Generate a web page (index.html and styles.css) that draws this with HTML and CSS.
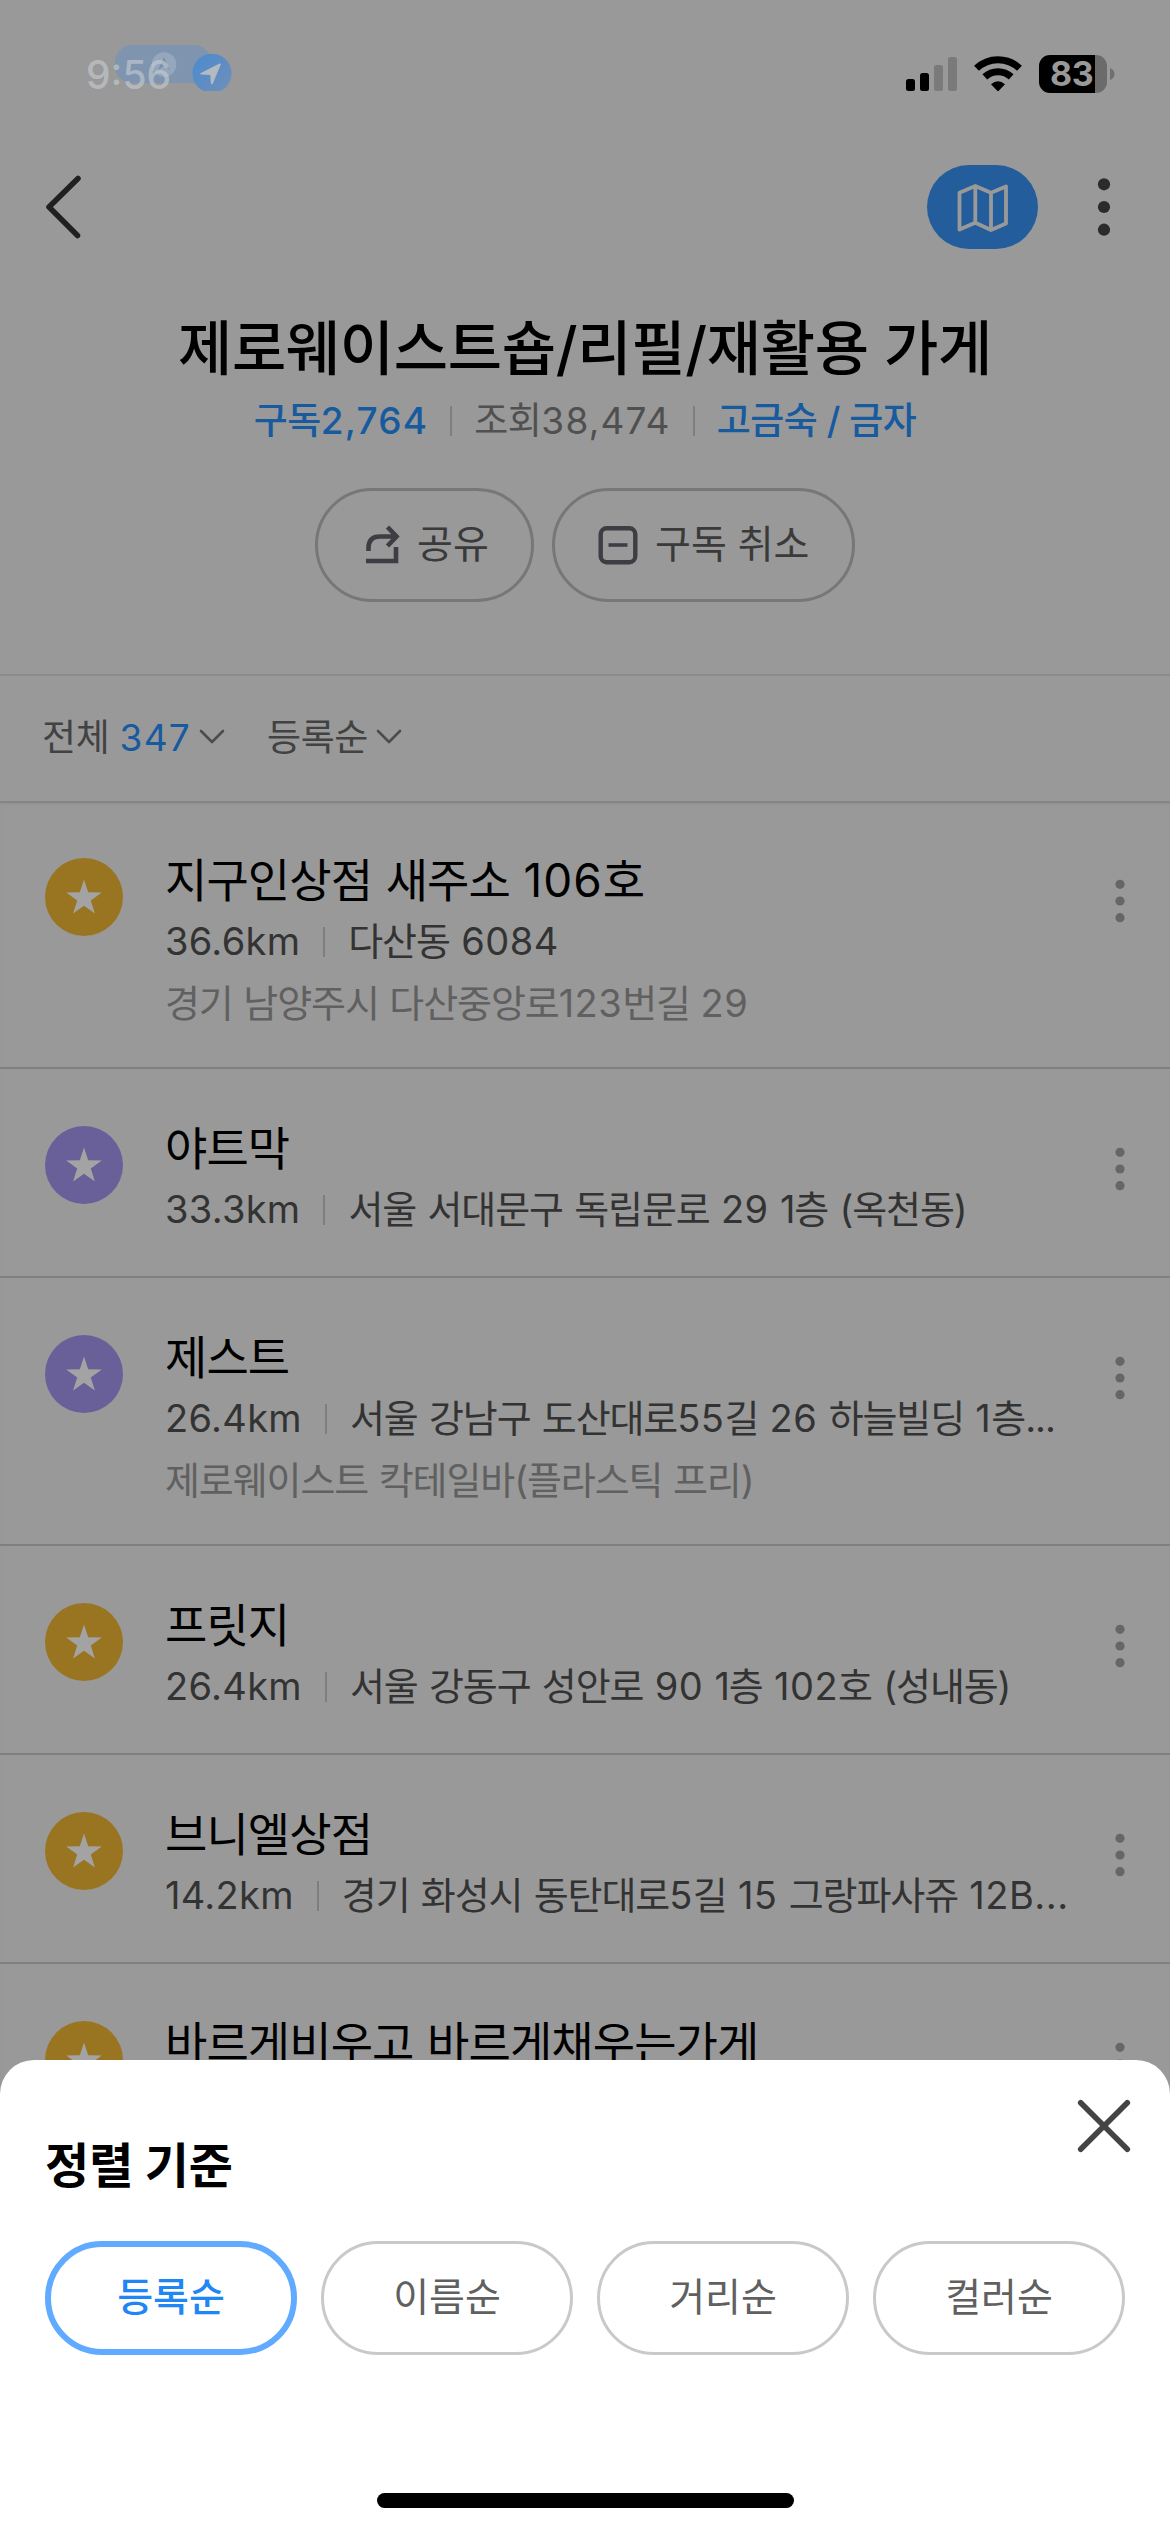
FILE: index.html
```html
<!DOCTYPE html>
<html lang="ko">
<head>
<meta charset="utf-8">
<title>제로웨이스트숍/리필/재활용 가게</title>
<link rel="stylesheet" href="styles.css">
</head>
<body>
<svg class="defs" width="0" height="0" aria-hidden="true">
  <symbol id="star" viewBox="0 0 78 78">
    <path d="M39 21.500l4.200 12.800 13.600.1-11 8.100 4.100 13.100L39 47.800l-10.900 7.800 4.100-13.100-11-8.100 13.600-.1z" fill="#a3a3a3"/>
  </symbol>
  <symbol id="dots" viewBox="0 0 10 44">
    <circle cx="5" cy="5.3" r="4.6"/><circle cx="5" cy="22" r="4.6"/><circle cx="5" cy="38.7" r="4.6"/>
  </symbol>
  <symbol id="down" viewBox="0 0 26 16">
    <path d="M2 2l11 11L24 2" fill="none" stroke="#4c4c4c" stroke-width="2.6" stroke-linecap="round" stroke-linejoin="round"/>
  </symbol>
</svg>
<div class="screen">
  <div class="status">
    <div class="clock">
      <span class="time">9:56</span>
      <svg class="activity" width="118" height="48" viewBox="0 0 118 48">
        <defs><linearGradient id="loc" x1="0" y1="0" x2="1" y2="1"><stop offset="0" stop-color="#4a8ad0"/><stop offset="1" stop-color="#7090b8"/></linearGradient></defs>
        <rect x="0" y="2" width="96" height="38" rx="17" fill="#6a90c0" fill-opacity=".55"/>
        <circle cx="49" cy="21.5" r="12.3" fill="#a6b6c8" fill-opacity=".55"/>
        <path d="M49 14l6 13-6-4-6 4z" fill="#71859c" fill-opacity=".7"/>
        <circle cx="97" cy="30.3" r="19.6" fill="url(#loc)"/>
        <path d="M85.5 30.2l19-9.6q1.600-.5 1.200 1.200l-8 19q-1.200 1.500-1.800-.2l-.6-8.600-9.200-.4q-1.800-.4-.6-1.400z" fill="#b4bac2"/>
      </svg>
    </div>
    <div class="indicators">
      <svg width="52" height="36" viewBox="0 0 52 36">
        <rect x="0" y="24" width="9" height="12" rx="2.500"/><rect x="14" y="18" width="9" height="18" rx="2.500"/>
        <rect x="28" y="10" width="9" height="26" rx="2.500" fill="#7a7a7a"/><rect x="42" y="2" width="9" height="34" rx="2.500" fill="#7a7a7a"/>
      </svg>
      <svg class="wifi" width="50" height="38" viewBox="0 0 50 38">
        <path d="M3.500 13.300A31 31 0 0 1 46.500 13.300" fill="none" stroke="#000" stroke-width="7"/>
        <path d="M11.800 21.800A19.500 19.500 0 0 1 38.200 21.800" fill="none" stroke="#000" stroke-width="7"/>
        <path d="M18 29.200Q25 23.500 32 29.200L25.800 35.800Q25 36.500 24.200 35.800z"/>
      </svg>
      <div class="battery"><span class="level">83</span></div>
      <svg class="nub" width="5" height="12" viewBox="0 0 5 12"><path d="M0 0Q4.500 2 4.500 6T0 12z" fill="#6f6f6f"/></svg>
    </div>
  </div>

  <nav class="nav">
    <svg width="40" height="66" viewBox="0 0 40 66"><path d="M34 4.500L5 33 33.500 61.500" fill="none" stroke="#202020" stroke-width="5.500" stroke-linecap="round" stroke-linejoin="round"/></svg>
    <div class="nav-right">
      <div class="map-btn">
        <svg width="52" height="50" viewBox="0 0 52 50"><path d="M2.500 10.800L18.300 4 34 10.800 49 4.500V41.500L34 48 18.300 40.800 2.500 47.500zM18.300 4V41M34 11V48" fill="none" stroke="#999" stroke-width="3.800" stroke-linejoin="round"/></svg>
      </div>
      <svg width="14" height="60" viewBox="0 0 14 60" fill="#2b2b2b"><circle cx="7" cy="7.300" r="6.100"/><circle cx="7" cy="30" r="6.100"/><circle cx="7" cy="52.700" r="6.100"/></svg>
    </div>
  </nav>

  <header class="head">
    <h1>제로웨이스트숍/리필/재활용 가게</h1>
    <div class="stats">
      <span class="blue">구독<span class="n">2,764</span></span><i class="bar"></i><span class="views">조회<span class="n">38,474</span></span><i class="bar"></i><span class="blue">고금숙 / 금자</span>
    </div>
    <div class="actions">
      <div class="pill share">
        <svg width="34" height="40" viewBox="0 0 34 40" fill="none" stroke="#3e3d43" stroke-width="4.600"><path d="M2.500 26V23Q2.500 11.500 14 11.500H30M21.500 2L30.500 11.500 21.500 21M0 36H30V22"/></svg>
        <span>공유</span>
      </div>
      <div class="pill unsub">
        <svg width="40" height="40" viewBox="0 0 40 40" fill="none" stroke="#3e3d43" stroke-width="4.400"><rect x="2.700" y="3.200" width="34.600" height="34" rx="6"/><path d="M10.500 20H29.500" stroke-width="3.600"/></svg>
        <span>구독 취소</span>
      </div>
    </div>
  </header>

  <div class="filters">
    <div class="filter"><span>전체 <b class="n">347</b></span><svg width="26" height="16"><use href="#down"/></svg></div>
    <div class="filter"><span>등록순</span><svg width="26" height="16"><use href="#down"/></svg></div>
  </div>

  <ul class="list">
    <li class="row">
      <svg class="badge gold" width="78" height="78"><use href="#star"/></svg>
      <div class="info">
        <h2>지구인상점 새주소 <span class="n">106</span>호</h2>
        <p class="sub"><span class="km">36.6km</span><i class="bar"></i><span>다산동 <span class="n">6084</span></span></p>
        <p class="note">경기 남양주시 다산중앙로<span class="n">123</span>번길 <span class="n">29</span></p>
      </div>
      <svg class="more" width="10" height="44"><use href="#dots"/></svg>
    </li>
    <li class="row">
      <svg class="badge violet" width="78" height="78"><use href="#star"/></svg>
      <div class="info">
        <h2>야트막</h2>
        <p class="sub"><span class="km">33.3km</span><i class="bar"></i><span>서울 서대문구 독립문로 <span class="n">29</span> 1층 (옥천동)</span></p>
      </div>
      <svg class="more" width="10" height="44"><use href="#dots"/></svg>
    </li>
    <li class="row">
      <svg class="badge violet" width="78" height="78"><use href="#star"/></svg>
      <div class="info">
        <h2>제스트</h2>
        <p class="sub"><span class="km">26.4km</span><i class="bar"></i><span>서울 강남구 도산대로<span class="n">55</span>길 <span class="n">26</span> 하늘빌딩 <span class="n">1</span>층...</span></p>
        <p class="note">제로웨이스트 칵테일바(플라스틱 프리)</p>
      </div>
      <svg class="more" width="10" height="44"><use href="#dots"/></svg>
    </li>
    <li class="row">
      <svg class="badge gold" width="78" height="78"><use href="#star"/></svg>
      <div class="info">
        <h2>프릿지</h2>
        <p class="sub"><span class="km">26.4km</span><i class="bar"></i><span>서울 강동구 성안로 <span class="n">90</span> 1층 <span class="n">102</span>호 (성내동)</span></p>
      </div>
      <svg class="more" width="10" height="44"><use href="#dots"/></svg>
    </li>
    <li class="row">
      <svg class="badge gold" width="78" height="78"><use href="#star"/></svg>
      <div class="info">
        <h2>브니엘상점</h2>
        <p class="sub"><span class="km">14.2km</span><i class="bar"></i><span>경기 화성시 동탄대로<span class="n">5</span>길 <span class="n">15</span> 그랑파사쥬 <span class="n">12B...</span></span></p>
      </div>
      <svg class="more" width="10" height="44"><use href="#dots"/></svg>
    </li>
    <li class="row">
      <svg class="badge gold" width="78" height="78"><use href="#star"/></svg>
      <div class="info">
        <h2>바르게비우고 바르게채우는가게</h2>
      </div>
      <svg class="more" width="10" height="44"><use href="#dots"/></svg>
    </li>
  </ul>

  <section class="sheet">
    <div class="sheet-head">
      <h3>정렬 기준</h3>
      <svg class="close" width="54" height="54" viewBox="0 0 54 54"><path d="M3.700 3.700L50.300 50.300M50.300 3.700L3.700 50.300" stroke="#444" stroke-width="5.600" stroke-linecap="round"/></svg>
    </div>
    <div class="options">
      <div class="option selected">등록순</div>
      <div class="option">이름순</div>
      <div class="option">거리순</div>
      <div class="option">컬러순</div>
    </div>
    <div class="home"></div>
  </section>
</div>
</body>
</html>
```

FILE: styles.css
```css
* { box-sizing: border-box; margin: 0; padding: 0; }
body { background: #999; }
svg { display: block; flex: none; }
.defs { position: absolute; }

.screen {
  position: relative;
  width: 1170px;
  height: 2532px;
  overflow: hidden;
  background: #999;
  color: #000;
  font-family: Inter, "Noto Sans CJK KR", sans-serif;
  white-space: nowrap;
}

/* status bar */
.status { height: 150px; display: flex; justify-content: space-between; padding: 43px 55px 0 86px; }
.clock { position: relative; height: 64px; display: flex; align-items: center; }
.time { font-size: 39px; font-weight: 500; line-height: 64px; color: rgba(200, 206, 212, 0.62); position: relative; z-index: 1; }
.activity { position: absolute; left: 29px; top: 0; }
.indicators { height: 64px; display: flex; align-items: flex-start; padding-top: 12px; }
.wifi { margin-left: 15px; }
.battery {
  width: 68px; height: 38px; margin-left: 16px; border-radius: 11px;
  background: linear-gradient(90deg, #000 56px, #6b6b6b 56px);
}
.level { display: block; padding-left: 11px; font-size: 34px; line-height: 38px; font-weight: 700; color: #999; letter-spacing: -0.5px; }
.nub { margin: 13px 0 0 3px; }

/* navigation */
.nav { height: 114px; display: flex; justify-content: space-between; align-items: center; padding: 0 59px 0 44px; }
.nav-right { display: flex; align-items: center; gap: 59px; }
.map-btn { width: 111px; height: 84px; border-radius: 42px; background: #245d9b; display: flex; align-items: center; justify-content: center; }

/* list header */
.head { height: 412px; border-bottom: 2px solid #8b8b8b; display: flex; flex-direction: column; align-items: center; padding-top: 45px; }
h1 { font-size: 59px; line-height: 80px; font-weight: 500; letter-spacing: -0.3px; }
.stats { display: flex; align-items: center; height: 63px; line-height: 63px; font-size: 37px; gap: 22px; letter-spacing: -0.5px; color: #505050; }
.stats .n { letter-spacing: 1.2px; }
.blue { color: #185a9e; font-weight: 500; }
.bar { width: 2px; height: 30px; background: #7e7e7e; flex: none; }
.actions { display: flex; gap: 18px; margin-top: 36px; }
.pill { height: 114px; line-height: 108px; border: 3px solid #777; border-radius: 57px; display: flex; align-items: center; gap: 17px; font-size: 39px; color: #3a3a3a; }
.pill span { margin-top: -2px; }
.share { width: 219px; padding-left: 48px; }
.unsub { width: 303px; padding-left: 43px; }

/* filters */
.filters { height: 125px; display: flex; align-items: center; gap: 42px; padding: 0 0 3px 42px; font-size: 37px; line-height: 60px; letter-spacing: -0.3px; color: #424242; }
.filter { display: flex; align-items: center; gap: 8px; }
.filter span { padding-top: 2px; }
.filter b { font-weight: 400; letter-spacing: 1.2px; color: #185a9e; }

/* places */
.list { list-style: none; box-shadow: inset 0 2px 0 #858585, inset 0 4px 3px -1px #909090; }
.row { display: flex; align-items: flex-start; padding: 48px 45px 0 45px; height: 209px; border-bottom: 2px solid #808080; }
.row:has(.note) { height: 268px; }
.badge { margin-top: 9px; border-radius: 50%; }
.gold { background: #997522; }
.violet { background: #69609a; }
.info { flex: 1; padding-left: 42px; }
h2 { font-size: 46px; line-height: 62px; font-weight: 400; letter-spacing: -0.9px; word-spacing: 1.5px; }
h2 .n { letter-spacing: 1px; }
.sub { display: flex; align-items: center; gap: 23px; height: 61px; line-height: 61px; font-size: 38px; letter-spacing: -1.1px; word-spacing: 1.7px; color: #333; }
.sub .n, .note .n { letter-spacing: 0.5px; }
.km { letter-spacing: 0.3px; }
.note { font-size: 38px; line-height: 62px; letter-spacing: -1.1px; word-spacing: 1px; color: #606060; }
.more { margin-top: 30px; fill: #666; }

/* sort sheet */
.sheet {
  position: absolute; left: 0; right: 0; bottom: 0; height: 472px;
  background: #fff; border-radius: 34px 34px 0 0; padding: 0 45px;
  display: flex; flex-direction: column;
}
.sheet-head { height: 181px; display: flex; justify-content: space-between; }
h3 { font-size: 48px; line-height: 64px; font-weight: 700; padding-top: 74px; }
.close { margin: 39px -6px 0 0; }
.options { display: grid; grid-template-columns: repeat(4, 252px); gap: 24px; }
.option { height: 114px; line-height: 106px; border: 3px solid #c9c9c9; border-radius: 57px; text-align: center; font-size: 39px; color: #606060; }
.selected { border: 6px solid #60abff; line-height: 100px; color: #1f87f5; font-weight: 500; }
.home { width: 417px; height: 15px; margin: auto auto 24px; border-radius: 8px; background: #000; }
```
